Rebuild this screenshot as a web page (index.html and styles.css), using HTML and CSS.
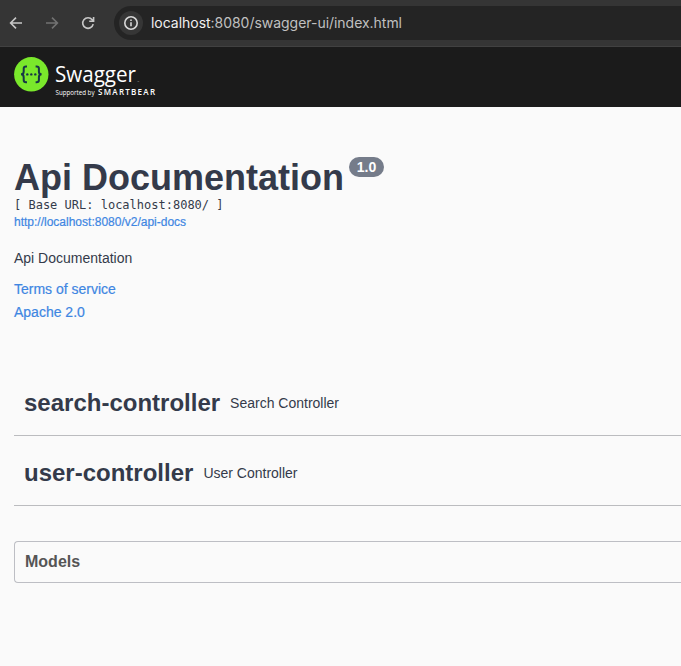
FILE: index.html
```html
<!DOCTYPE html>
<html lang="en">
<head>
<meta charset="utf-8">
<title>Swagger UI</title>
<link rel="stylesheet" href="styles.css">
</head>
<body>
<header class="browser">
  <svg class="nav" width="16" height="16" viewBox="0 0 16 16"><path d="M14 8H3M8 2.6 2.6 8 8 13.4"/></svg>
  <svg class="nav disabled" width="16" height="16" viewBox="0 0 16 16"><path d="M2 8h11M8 2.6 13.4 8 8 13.4"/></svg>
  <svg class="nav" width="16" height="16" viewBox="0 0 16 16"><path d="M13.2 9.2A5.3 5.3 0 1 1 12.2 4.8L13.5 6.1M13.6 2v4.300H9.200"/></svg>
  <div class="address">
    <span class="info"><svg width="16" height="16" viewBox="0 0 16 16"><circle cx="8" cy="8" r="6.2"/><path d="M8 7.200v4M8 4.500v1.500"/></svg></span>
    <span class="url"><b>localhost</b>:8080/swagger-ui/index.html</span>
  </div>
</header>
<div class="topbar">
  <svg class="logo" width="145" height="46" viewBox="0 0 145 46">
    <circle cx="17.3" cy="17.3" r="17.2" fill="#7ae82b"/>
    <g fill="none" stroke="#173647" stroke-width="2">
      <path d="M13 9.400h-1q-2.300 0-2.300 2.200v2.800q0 2.900-2.700 2.900q2.700 0 2.700 2.900v2.800q0 2.200 2.300 2.200h1"/>
      <path d="M21.600 9.400h1q2.300 0 2.300 2.200v2.800q0 2.900 2.700 2.900q-2.700 0-2.700 2.900v2.800q0 2.200-2.300 2.200h-1"/>
    </g>
    <g fill="#173647"><circle cx="13.300" cy="17.400" r="1.200"/><circle cx="17.300" cy="17.400" r="1.200"/><circle cx="21.300" cy="17.400" r="1.200"/></g>
    <text class="brand" x="41" y="24.500" textLength="81" lengthAdjust="spacingAndGlyphs">Swagger</text>
    <text class="tm" x="123" y="25.500">™</text>
    <text class="support" x="41.500" y="38" textLength="39" lengthAdjust="spacingAndGlyphs">Supported by</text>
    <text class="bear" x="84" y="38.200" textLength="57" lengthAdjust="spacing">SMARTBEAR</text>
  </svg>
</div>
<main>
  <section class="intro">
    <h1>Api Documentation<span class="version">1.0</span></h1>
    <pre>[ Base URL: localhost:8080/ ]</pre>
    <a class="docs">http://localhost:8080/v2/api-docs</a>
    <p>Api Documentation</p>
    <a class="meta">Terms of service</a>
    <a class="meta">Apache 2.0</a>
  </section>
  <section class="tags">
    <div class="tag"><h2>search-controller</h2><small>Search Controller</small></div>
    <div class="tag"><h2>user-controller</h2><small>User Controller</small></div>
  </section>
  <section class="models"><h3>Models</h3></section>
</main>
</body>
</html>
```
FILE: styles.css
```css
* { box-sizing: border-box; }
body {
  margin: 0;
  height: 666px;
  overflow: hidden;
  background: #fafafa;
  color: #343a4a;
  font-family: "Liberation Sans", Arial, sans-serif;
}
h1, h2, h3, p, pre { margin: 0; }
svg { display: block; flex: none; }

.browser {
  display: flex;
  align-items: center;
  gap: 20px;
  height: 47px;
  padding: 0 0 1px 8px;
  background: #353535;
  border-bottom: 1px solid #414141;
}
.nav { fill: none; stroke: #c7c7c7; stroke-width: 1.6; }
.nav.disabled { stroke: #727272; }
.address {
  display: flex;
  align-items: center;
  flex: 1;
  gap: 8px;
  height: 34px;
  margin-left: -2px;
  padding-left: 5px;
  border-radius: 17px 0 0 17px;
  background: #242424;
}
.info {
  display: grid;
  place-items: center;
  width: 24px;
  height: 24px;
  border-radius: 50%;
  background: #363636;
}
.info svg { fill: none; stroke: #d8d8d8; stroke-width: 1.6; }
.url { font: 14px/20px Inter, sans-serif; letter-spacing: -0.03px; color: #c0c0c0; white-space: nowrap; }
.url b { font-weight: 400; color: #f0f0f0; }

.topbar { height: 60px; padding: 10px 14px; background: #1b1b1b; }
.logo text { fill: #fff; font-family: "Open Sans", sans-serif; }
.logo .brand { font-size: 22.5px; }
.logo .tm { font-size: 3px; fill: #999; }
.logo .support { font-size: 6.5px; }
.logo .bear { font-size: 8px; font-weight: 600; }

main { padding: 50px 0 0 14px; }
.intro { height: 208px; }
h1 { display: flex; font-size: 36px; line-height: 41px; height: 41px; white-space: nowrap; }
.version {
  width: 35px;
  height: 20px;
  margin-left: 5px;
  border-radius: 10px;
  background: #757c8a;
  color: #fff;
  font-size: 14px;
  line-height: 21px;
  text-align: center;
}
pre { font: 12px/14px "DejaVu Sans Mono", monospace; }
.docs { display: block; font-size: 12px; line-height: 20px; }
a { color: #3e86e2; -webkit-text-stroke: 0.2px currentColor; }
p { margin-top: 18px; font-size: 14px; line-height: 16px; }
.meta { display: block; font-size: 14px; line-height: 23px; }
p + .meta { margin-top: 12px; }

.tag {
  display: flex;
  align-items: center;
  gap: 10px;
  height: 70px;
  padding: 4px 10px 0;
  border-bottom: 1px solid #bbbcbf;
}
h2 { font-size: 24px; line-height: 28px; }
small { font-size: 14px; }
.tags { margin-top: 1px; }
.models {
  height: 42px;
  margin-top: 35px;
  padding: 0 10px;
  border: 1px solid #bdbec4;
  border-right: 0;
  border-radius: 4px 0 0 4px;
}
h3 { font-size: 16px; line-height: 39px; color: #555; }
```
